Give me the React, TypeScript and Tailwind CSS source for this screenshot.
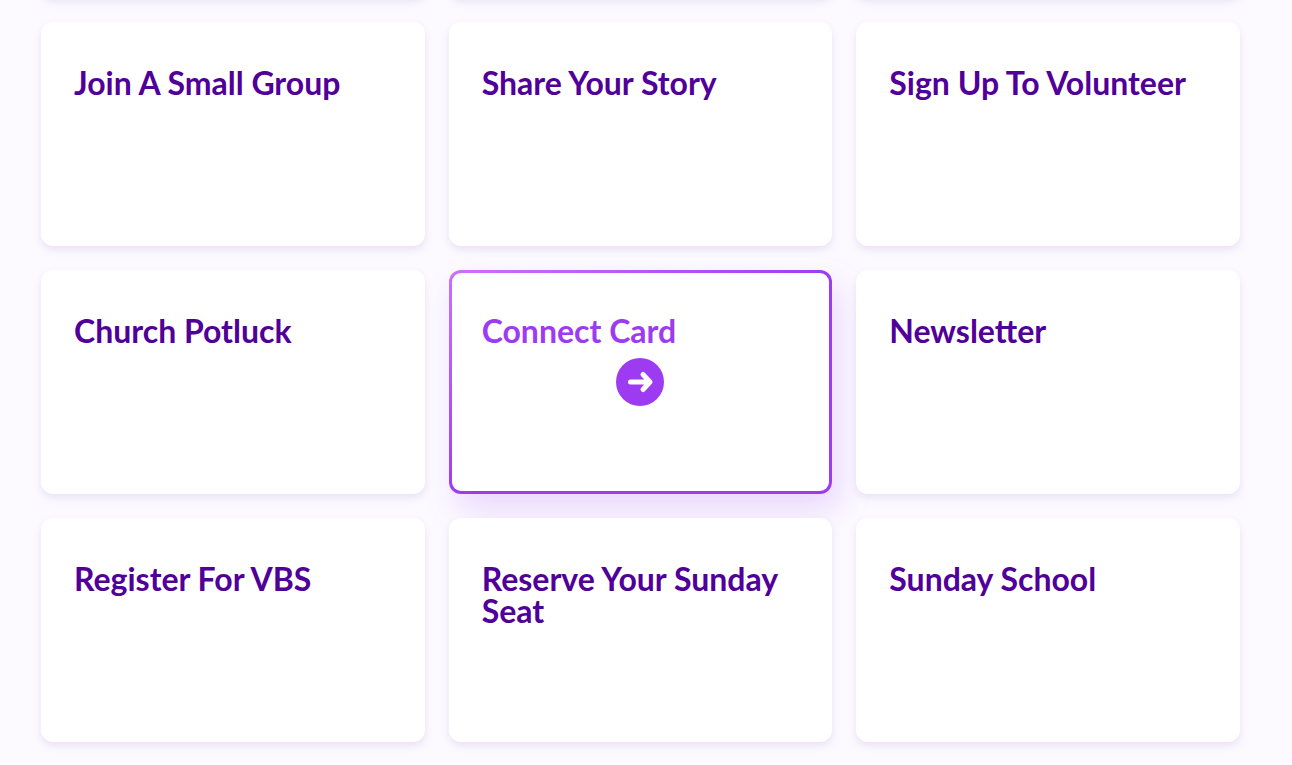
import { clsx } from "clsx"

const cards = [
  { title: "Join A Small Group" },
  { title: "Share Your Story" },
  { title: "Sign Up To Volunteer" },
  { title: "Church Potluck" },
  { title: "Connect Card", active: true },
  { title: "Newsletter" },
  { title: "Register For VBS" },
  { title: "Reserve Your Sunday Seat" },
  { title: "Sunday School" },
]

function ArrowBadge() {
  return (
    <span className="mt-[11px] flex size-12 items-center justify-center self-center rounded-full bg-[#9d3bf3]">
      <svg
        viewBox="0 0 48 48"
        className="size-12"
        fill="none"
        stroke="white"
        strokeWidth="5"
        strokeLinecap="round"
        strokeLinejoin="round"
        aria-hidden="true"
      >
        <path d="M14.5 24H33.5M27 16.5L34 24L27 31.5" />
      </svg>
    </span>
  )
}

function ActionCard({ title, active }: { title: string; active?: boolean }) {
  return (
    <a
      href="#"
      className={clsx(
        "flex h-56 flex-col rounded-xl p-[3px]",
        active
          ? "bg-linear-to-br from-[#cb70ff] to-[#9d3bf3] to-50% shadow-[8px_16px_32px_rgba(157,59,243,0.18)]"
          : "bg-white shadow-[0_4px_8px_rgba(80,0,153,0.1)]"
      )}
    >
      <div className="flex grow flex-col rounded-[9px] bg-white px-[30px] pt-[42px]">
        <h2
          className={clsx(
            "text-[32px] leading-8 font-bold",
            active ? "text-[#9d3bf3]" : "text-[#500099]"
          )}
        >
          {title}
        </h2>
        {active && <ArrowBadge />}
      </div>
    </a>
  )
}

export default function App() {
  return (
    <main className="overflow-hidden bg-[#fcfaff] pr-[52px] pb-6 pl-[41px] font-['Lato',sans-serif]">
      {/* tail of the row scrolled out of view */}
      <div className="-mt-[26px] grid grid-cols-3 gap-6" aria-hidden="true">
        <div className="h-6 rounded-xl bg-white shadow-[0_4px_8px_rgba(80,0,153,0.1)]" />
        <div className="h-6 rounded-xl bg-white shadow-[0_4px_8px_rgba(80,0,153,0.1)]" />
        <div className="h-6 rounded-xl bg-white shadow-[0_4px_8px_rgba(80,0,153,0.1)]" />
      </div>
      <div className="mt-6 grid grid-cols-3 gap-6">
        {cards.map((card) => (
          <ActionCard key={card.title} {...card} />
        ))}
      </div>
    </main>
  )
}
